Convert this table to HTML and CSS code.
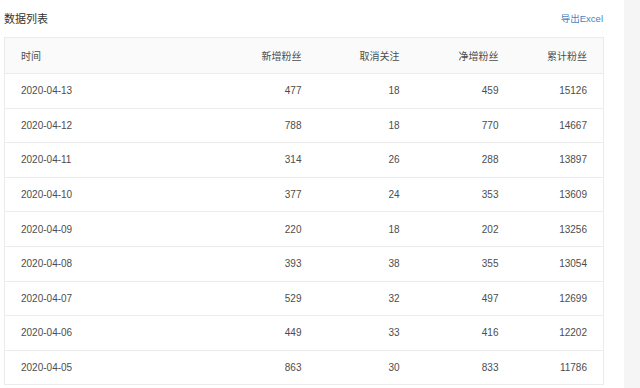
FILE: index.html
```html
<!DOCTYPE html>
<html lang="zh">
<head>
<meta charset="utf-8">
<link rel="stylesheet" href="styles.css">
</head>
<body>
<div class="page">
  <main class="main">
    <div class="title-row">
      <h2 class="title">数据列表</h2>
      <a class="export" href="#">导出Excel</a>
    </div>
    <table class="data">
      <colgroup>
        <col class="c0"><col class="c1"><col class="c2"><col class="c3"><col class="c4">
      </colgroup>
      <thead>
        <tr><th class="left">时间</th><th>新增粉丝</th><th>取消关注</th><th>净增粉丝</th><th>累计粉丝</th></tr>
      </thead>
      <tbody>
        <tr><td class="left">2020-04-13</td><td>477</td><td>18</td><td>459</td><td>15126</td></tr>
        <tr><td class="left">2020-04-12</td><td>788</td><td>18</td><td>770</td><td>14667</td></tr>
        <tr><td class="left">2020-04-11</td><td>314</td><td>26</td><td>288</td><td>13897</td></tr>
        <tr><td class="left">2020-04-10</td><td>377</td><td>24</td><td>353</td><td>13609</td></tr>
        <tr><td class="left">2020-04-09</td><td>220</td><td>18</td><td>202</td><td>13256</td></tr>
        <tr><td class="left">2020-04-08</td><td>393</td><td>38</td><td>355</td><td>13054</td></tr>
        <tr><td class="left">2020-04-07</td><td>529</td><td>32</td><td>497</td><td>12699</td></tr>
        <tr><td class="left">2020-04-06</td><td>449</td><td>33</td><td>416</td><td>12202</td></tr>
        <tr><td class="left">2020-04-05</td><td>863</td><td>30</td><td>833</td><td>11786</td></tr>
      </tbody>
    </table>
  </main>
  <aside class="side"></aside>
</div>
</body>
</html>
```
FILE: styles.css
```css
html, body {
  margin: 0;
  padding: 0;
  background: #fff;
}
body {
  font-family: "Liberation Sans", "Noto Sans CJK SC", sans-serif;
  color: #555;
  overflow: hidden;
  height: 388px;
}
.page {
  display: flex;
  height: 388px;
}
.main {
  width: 599px;
  padding-left: 4px;
  flex: none;
}
.side {
  margin-left: 21px;
  flex: 1;
  background: #f5f5f5;
}
.title-row {
  height: 37px;
  display: flex;
  align-items: center;
  justify-content: space-between;
}
.title {
  margin: 0;
  font-size: 11px;
  font-weight: normal;
  color: #333;
  position: relative;
  top: -1px;
}
.export {
  font-size: 9.5px;
  color: #4a7fc1;
  text-decoration: none;
  position: relative;
  top: -1px;
}
.data {
  width: 599px;
  border-collapse: collapse;
  table-layout: fixed;
  font-size: 10px;
  border: 1px solid #ebebeb;
}
.c0 { width: 200px; }
.c1 { width: 113px; }
.c2 { width: 98px; }
.c3 { width: 99px; }
.c4 { width: 89px; }
.data th, .data td {
  text-align: right;
  padding: 0 16px 0 0;
  font-weight: normal;
  color: #4d4d4d;
  border-bottom: 1px solid #ececec;
}
.data th {
  height: 35px;
  background: #fafafa;
}
.data td {
  height: 33.6px;
}
.data .left {
  text-align: left;
  padding-left: 16px;
}
```
